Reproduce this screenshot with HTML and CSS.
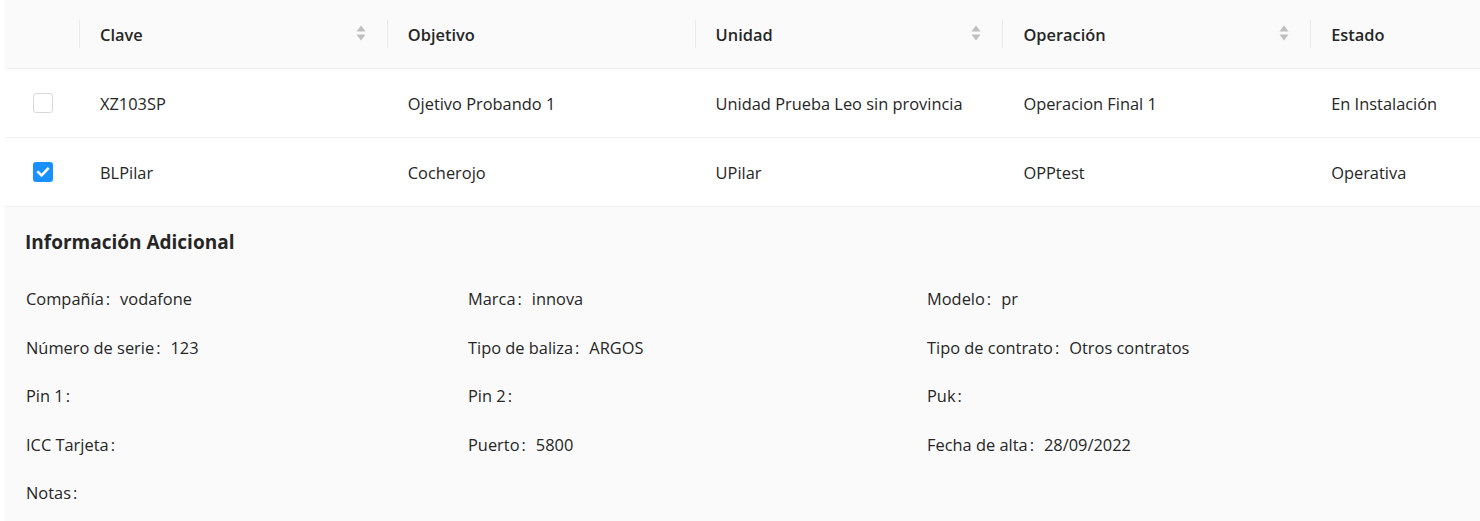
FILE: index.html
```html
<!DOCTYPE html>
<html lang="es">
<head>
<meta charset="utf-8">
<title>Balizas</title>
<link rel="stylesheet" href="styles.css">
</head>
<body>
<div class="viewport">
<div class="table">
  <div class="row head">
    <div class="cell sel sep"></div>
    <div class="cell sep"><span>Clave</span><svg class="sorter" viewBox="0 0 10 16" width="10" height="16"><path d="M5 0.5 L9.5 6.5 H0.5 Z"/><path d="M0.5 9.5 H9.5 L5 15.5 Z"/></svg></div>
    <div class="cell sep"><span>Objetivo</span></div>
    <div class="cell sep"><span>Unidad</span><svg class="sorter" viewBox="0 0 10 16" width="10" height="16"><path d="M5 0.5 L9.5 6.5 H0.5 Z"/><path d="M0.5 9.5 H9.5 L5 15.5 Z"/></svg></div>
    <div class="cell sep"><span>Operación</span><svg class="sorter" viewBox="0 0 10 16" width="10" height="16"><path d="M5 0.5 L9.5 6.5 H0.5 Z"/><path d="M0.5 9.5 H9.5 L5 15.5 Z"/></svg></div>
    <div class="cell"><span>Estado</span></div>
  </div>
  <div class="row body">
    <div class="cell sel"><span class="checkbox"></span></div>
    <div class="cell">XZ103SP</div>
    <div class="cell">Ojetivo Probando 1</div>
    <div class="cell">Unidad Prueba Leo sin provincia</div>
    <div class="cell">Operacion Final 1</div>
    <div class="cell">En Instalación</div>
  </div>
  <div class="row body">
    <div class="cell sel"><span class="checkbox checked"><svg viewBox="0 0 20 20" width="20" height="20"><path d="M5.2 10.2 L8.6 13.4 L14.8 6.8" fill="none" stroke="#fff" stroke-width="2.5" stroke-linecap="square"/></svg></span></div>
    <div class="cell">BLPilar</div>
    <div class="cell">Cocherojo</div>
    <div class="cell">UPilar</div>
    <div class="cell">OPPtest</div>
    <div class="cell">Operativa</div>
  </div>
  <div class="expanded">
    <div class="desc-title">Información Adicional</div>
    <div class="desc-grid">
      <div class="item"><span class="label">Compañía</span><span class="value">vodafone</span></div>
      <div class="item"><span class="label">Marca</span><span class="value">innova</span></div>
      <div class="item"><span class="label">Modelo</span><span class="value">pr</span></div>
      <div class="item"><span class="label">Número de serie</span><span class="value">123</span></div>
      <div class="item"><span class="label">Tipo de baliza</span><span class="value">ARGOS</span></div>
      <div class="item"><span class="label">Tipo de contrato</span><span class="value">Otros contratos</span></div>
      <div class="item"><span class="label">Pin 1</span><span class="value"></span></div>
      <div class="item"><span class="label">Pin 2</span><span class="value"></span></div>
      <div class="item"><span class="label">Puk</span><span class="value"></span></div>
      <div class="item"><span class="label">ICC Tarjeta</span><span class="value"></span></div>
      <div class="item"><span class="label">Puerto</span><span class="value">5800</span></div>
      <div class="item"><span class="label">Fecha de alta</span><span class="value">28/09/2022</span></div>
      <div class="item"><span class="label">Notas</span><span class="value"></span></div>
    </div>
  </div>
</div>
</div>
</body>
</html>
```

FILE: styles.css
```css
html, body {
  margin: 0;
  padding: 0;
  background: #ffffff;
}

body {
  font-family: "Open Sans", "Noto Sans", sans-serif;
  font-size: 16.4px;
  color: #262626;
}

.viewport {
  width: 1480px;
  height: 521px;
  overflow: hidden;
  padding-left: 5px;
  box-sizing: border-box;
}

.table {
  width: 1614px;
}

.row {
  display: grid;
  grid-template-columns: 75px 307.8px 307.8px 307.8px 307.8px 307.8px;
  border-bottom: 1px solid #f0f0f0;
}

.head {
  height: 68px;
  background: #fafafa;
  font-weight: 600;
}

.body {
  height: 68px;
}

.cell {
  position: relative;
  display: flex;
  align-items: center;
  justify-content: space-between;
  padding: 0 22px 0 20px;
  white-space: nowrap;
}

.cell.sel {
  justify-content: center;
  padding: 0;
}

.sep::before {
  content: "";
  position: absolute;
  right: 0;
  top: 50%;
  width: 1px;
  height: 28px;
  margin-top: -14px;
  background: #ebebeb;
}

.sorter {
  fill: #bfbfbf;
  margin-top: -3px;
}

.checkbox {
  display: block;
  box-sizing: border-box;
  width: 20px;
  height: 20px;
  border: 1px solid #d9d9d9;
  border-radius: 3px;
  background: #fff;
}

.checkbox.checked {
  border: none;
  background: #1890ff;
}

.checkbox svg {
  display: block;
}

.expanded {
  background: #fafafa;
  padding: 20px 20px 20px 20px;
  min-height: 320px;
}

.desc-title {
  font-size: 19px;
  font-weight: 700;
  line-height: 31px;
  margin-bottom: 27px;
}

.desc-grid {
  display: grid;
  grid-template-columns: 442px 459px 1fr;
  grid-auto-rows: 48.5px;
  padding-left: 1px;
}

.item {
  line-height: 27px;
  white-space: nowrap;
}

.label::after {
  content: ":";
  margin: 0 10px 0 2px;
}
```
